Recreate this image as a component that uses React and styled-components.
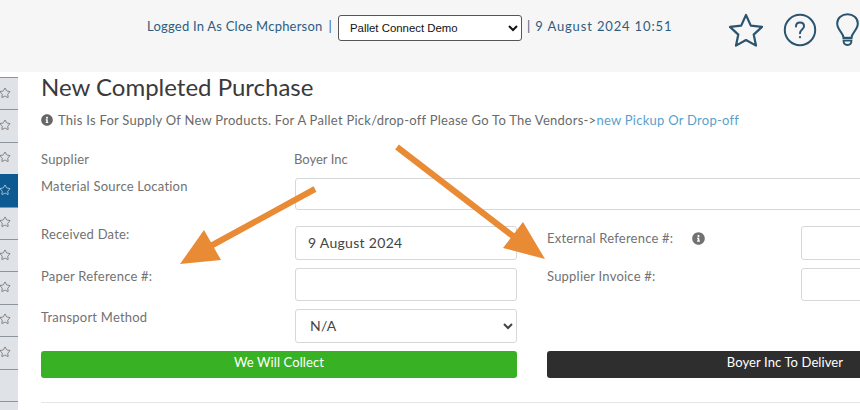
import React from 'react'
import styled, { createGlobalStyle } from 'styled-components'
import { Star } from 'lucide-react'
import { FaInfoCircle } from 'react-icons/fa'

const GlobalStyle = createGlobalStyle`
    * { box-sizing: border-box; }
    html, body { margin: 0; padding: 0; background: #fff; overflow: hidden; }
    body { font-family: Lato, "Liberation Sans", sans-serif; }
`

const sideRows = [false, false, false, true, false, false, false, false, false, null, null]

const HeaderStar = () => (
    <svg width="36" height="34" viewBox="0 0 36 34" fill="none" stroke="#2a5470" strokeWidth="2.2" strokeLinejoin="round">
        <path d="M18 2 L22.8 12.6 L34 13.9 L25.7 21.6 L28 32.6 L18 27 L8 32.6 L10.3 21.6 L2 13.9 L13.2 12.6 Z" />
    </svg>
)

const HeaderHelp = () => (
    <svg width="34" height="34" viewBox="0 0 34 34" fill="none" stroke="#2a5470" strokeWidth="2">
        <circle cx="17" cy="17" r="15.2" />
        <path d="M13 13.4 C13 10.8 14.8 9.6 17 9.6 C19.4 9.6 21 11 21 13.2 C21 16.4 17 16.6 17 20.2" strokeLinecap="round" />
        <circle cx="17" cy="24.2" r="1.1" fill="#2a5470" stroke="none" />
    </svg>
)

const HeaderBulb = () => (
    <svg width="24" height="34" viewBox="0 0 24 34" fill="none" stroke="#2a5470" strokeWidth="2">
        <path d="M7.5 24.5 C7.5 20 1.2 17 1.2 10.5 C1.2 5 6 1.2 11.5 1.2 C17 1.2 21.8 5 21.8 10.5 C21.8 17 15.5 20 15.5 24.5" />
        <path d="M6.5 25 H16.5" strokeWidth="2.4" />
        <path d="M7.5 27.6 H15.5 C15.5 30.6 14 32 11.5 32 C9 32 7.5 30.6 7.5 27.6 Z" strokeWidth="1.8" />
    </svg>
)

const Arrows = () => (
    <ArrowLayer width="860" height="410" viewBox="0 0 860 410">
        <path d="M315 189 L207 248" stroke="#e98a35" strokeWidth="6" />
        <path d="M180 264 L204 230 L221 260 Z" fill="#e98a35" />
        <path d="M397 147 L518 240" stroke="#e98a35" strokeWidth="6" />
        <path d="M545 259 L523 222 L503 248 Z" fill="#e98a35" />
    </ArrowLayer>
)

export default function App() {
    return (
        <Page>
            <GlobalStyle />
            <Header>
                <LoggedIn>Logged In As Cloe Mcpherson<Pipe>|</Pipe></LoggedIn>
                <CompanySelect defaultValue="demo">
                    <option value="demo">Pallet Connect Demo</option>
                </CompanySelect>
                <DateText>| 9 August 2024 10:51</DateText>
                <HeaderIcons>
                    <HeaderStar />
                    <HeaderHelp />
                    <HeaderBulb />
                </HeaderIcons>
            </Header>
            <Body>
                <Sidebar>
                    {sideRows.map((active, i) => (
                        <SideRow key={i} $active={active}>
                            {active !== null && <Star size={12} strokeWidth={1.2} />}
                        </SideRow>
                    ))}
                </Sidebar>
                <Main>
                    <Title>New Completed Purchase</Title>
                    <Notice>
                        <FaInfoCircle size={12} />
                        <span>This Is For Supply Of New Products. For A Pallet Pick/drop-off Please Go To The Vendors-&gt;<NoticeLink>new Pickup Or Drop-off</NoticeLink></span>
                    </Notice>
                    <SupplierRow>
                        <Label>Supplier</Label>
                        <span>Boyer Inc</span>
                    </SupplierRow>
                    <SourceRow>
                        <Label>Material Source Location</Label>
                        <WideInput />
                    </SourceRow>
                    <FormGrid>
                        <Label>Received Date:</Label>
                        <Field defaultValue="9 August 2024" />
                        <Label $drop>External Reference #:<InfoMark><FaInfoCircle size={13} /></InfoMark></Label>
                        <Field />

                        <Label>Paper Reference #:</Label>
                        <Field />
                        <Label>Supplier Invoice #:</Label>
                        <Field />

                        <Label>Transport Method</Label>
                        <FieldSelect defaultValue="na">
                            <option value="na">N/A</option>
                        </FieldSelect>
                    </FormGrid>
                    <Buttons>
                        <ActionButton $bg="#38b224">We Will Collect</ActionButton>
                        <ActionButton $bg="#2e2e2e">Boyer Inc To Deliver</ActionButton>
                    </Buttons>
                    <Divider />
                </Main>
            </Body>
            <Arrows />
        </Page>
    )
}

const Page = styled.div`
    position: relative;
    width: 860px;
    height: 410px;
    overflow: hidden;
`

const ArrowLayer = styled.svg`
    position: absolute;
    left: 0;
    top: 0;
    pointer-events: none;
`

const Header = styled.div`
    display: flex;
    align-items: center;
    height: 72px;
    padding: 0 0 20px 147px;
    background: #f6f6f6;
    color: #2f5d7e;
    font-size: 13px;
    white-space: nowrap;
`

const LoggedIn = styled.span`
    width: 191px;
    flex: none;
    letter-spacing: 0.22px;
`

const Pipe = styled.span`
    margin-left: 6px;
`

const DateText = styled.span`
    margin-left: 5px;
    width: 201px;
    flex: none;
    letter-spacing: 0.85px;
`

const CompanySelect = styled.select`
    width: 184px;
    height: 26px;
    flex: none;
    margin-top: 4px;
    padding: 0 0 0 7px;
    border: 1px solid #555;
    border-radius: 3px;
    background: #fff;
    color: #111;
    font: 11.4px "Liberation Sans", sans-serif;
`

const HeaderIcons = styled.div`
    display: flex;
    align-items: center;
    gap: 19px;
    flex: none;
    margin: 8px 0 0 0;
    svg { flex: none; }
`

const Body = styled.div`
    display: flex;
`

const Sidebar = styled.div`
    width: 18px;
    flex: none;
    overflow: hidden;
    padding-top: 5px;
`

const SideRow = styled.div`
    display: flex;
    align-items: center;
    height: 32.4px;
    padding-bottom: 2px;
    border-top: 1px solid ${p => p.$active ? '#0d5a92' : '#8d949b'};
    background: ${p => p.$active ? '#0d5a92' : '#dfe3e8'};
    color: ${p => p.$active ? '#fff' : '#444'};
    svg { flex: none; margin-left: -1px; }
`

const Main = styled.div`
    flex: none;
    width: 1100px;
    padding-left: 23px;
    color: #727272;
    font-size: 13px;
`

const Title = styled.h1`
    margin: 0;
    height: 33px;
    color: #3a3a3a;
    font-size: 24px;
    line-height: 30px;
    font-weight: 400;
    letter-spacing: 0;
`

const Notice = styled.div`
    display: flex;
    align-items: center;
    gap: 5px;
    height: 22px;
    margin-top: 4px;
    color: #6a6a6a;
    letter-spacing: 0.26px;
    svg { flex: none; color: #666; }
`

const NoticeLink = styled.span`
    color: #5a9fcb;
`

const SupplierRow = styled.div`
    display: grid;
    grid-template-columns: 253px 1fr;
    align-items: center;
    height: 20px;
    margin-top: 18px;
`

const SourceRow = styled.div`
    display: grid;
    grid-template-columns: 254px 1fr;
    margin-top: 9px;
`

const Label = styled.label`
    display: block;
    padding-top: ${p => p.$drop ? '4px' : '0'};
    letter-spacing: 0.22px;
    line-height: 16px;
`

const InfoMark = styled.span`
    margin-left: 19px;
    vertical-align: -2px;
`

const inputLook = `
    border: 1px solid #d5d8db;
    border-radius: 3px;
    background: #fff;
    color: #444;
    font-family: Lato, "Liberation Sans", sans-serif;
    font-size: 14px;
    letter-spacing: 0.3px;
    outline: none;
`

const WideInput = styled.input`
    ${inputLook}
    height: 32px;
    width: 600px;
`

const FormGrid = styled.div`
    display: grid;
    grid-template-columns: 254px 222px 254px 222px;
    column-gap: 0;
    row-gap: 8px;
    grid-auto-rows: 33.5px;
    margin-top: 16px;
    & > label:nth-child(4n + 3) { margin-left: 30px; width: 224px; }
    & > input:nth-child(4n) { margin-left: 30px; }
`

const Field = styled.input`
    ${inputLook}
    height: 100%;
    width: 100%;
    padding: 0 12px;
`

const FieldSelect = styled.select`
    ${inputLook}
    height: 100%;
    width: 100%;
    padding: 0 0 0 10px;
`

const Buttons = styled.div`
    display: grid;
    grid-template-columns: 476px 476px;
    column-gap: 30px;
    margin-top: 8px;
`

const ActionButton = styled.button`
    height: 27px;
    padding: 0 0 4px;
    border: 0;
    border-radius: 3px;
    background: ${p => p.$bg};
    color: #fff;
    font-family: Lato, "Liberation Sans", sans-serif;
    font-size: 13px;
    letter-spacing: 0.1px;
`

const Divider = styled.hr`
    width: 100%;
    height: 1px;
    margin: 24px 0 0;
    border: 0;
    background: #e3e5e7;
`
